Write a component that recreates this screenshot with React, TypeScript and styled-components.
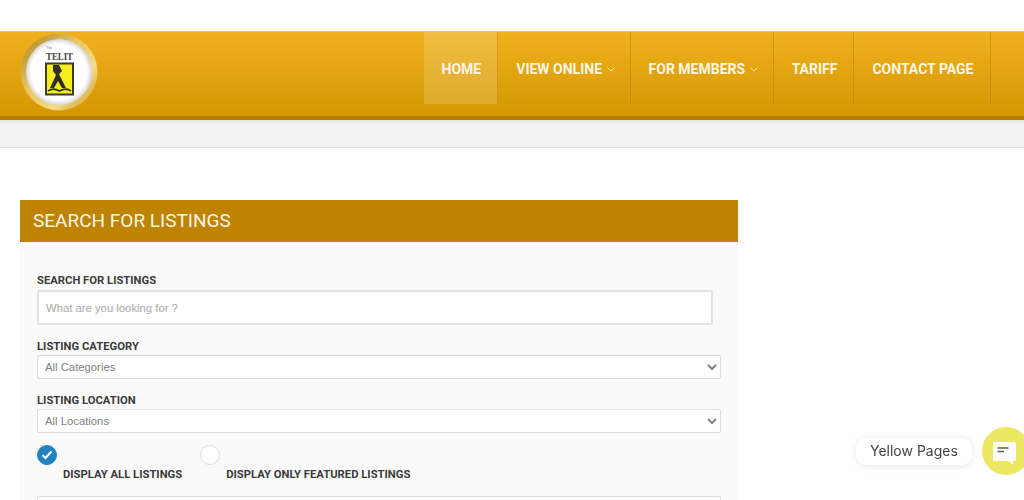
import styled, { createGlobalStyle } from "styled-components"

const GlobalStyle = createGlobalStyle`
  html, body {
    margin: 0;
    padding: 0;
    height: 500px;
    overflow: hidden;
    background: #fff;
    font-family: Roboto, "Liberation Sans", sans-serif;
  }
  * {
    box-sizing: border-box;
  }
`

const navItems = [
  { label: "HOME", active: true },
  { label: "VIEW ONLINE", caret: true },
  { label: "FOR MEMBERS", caret: true },
  { label: "TARIFF" },
  { label: "CONTACT PAGE" },
]

const chevron =
  "data:image/svg+xml,%3Csvg xmlns='http://www.w3.org/2000/svg' width='10' height='6'%3E%3Cpath d='M1 1l4 4 4-4' fill='none' stroke='%23808080' stroke-width='2'/%3E%3C/svg%3E"

function Caret() {
  return (
    <CaretIcon viewBox="0 0 10 6" aria-hidden="true">
      <path d="M1 1l4 4 4-4" fill="none" stroke="currentColor" strokeWidth="1.200" />
    </CaretIcon>
  )
}

function Logo() {
  return (
    <LogoMark viewBox="0 0 78 78" aria-hidden="true">
      <defs>
        <linearGradient id="ring" x1="0" y1="0" x2="1" y2="1">
          <stop offset="0" stopColor="#a9801f" />
          <stop offset="0.4" stopColor="#e8c560" />
          <stop offset="0.7" stopColor="#f4dc86" />
          <stop offset="1" stopColor="#c4901a" />
        </linearGradient>
        <radialGradient id="face">
          <stop offset="0.85" stopColor="#fff" />
          <stop offset="1" stopColor="#d6d6d6" />
        </radialGradient>
      </defs>
      <circle cx="39" cy="39" r="38.500" fill="url(#ring)" />
      <circle cx="39" cy="39" r="33" fill="url(#face)" />
      <text x="26" y="15.500" fontFamily="'Liberation Sans', sans-serif" fontSize="3.500" fill="#777">The</text>
      <text x="26" y="26.500" textLength="27" lengthAdjust="spacingAndGlyphs" fontFamily="'Liberation Serif', serif" fontWeight="700" fontSize="10.500" fill="#3f3f3f">TELIT</text>
      <rect x="26" y="30.500" width="27" height="31" fill="#f6ec1e" stroke="#3a3c30" strokeWidth="2" />
      <path d="M33 32h6l3 6-3 3 7 14h-4l-4-7-4 7h-4l6-13-3-4z" fill="#2e2e26" />
      <path d="M28 58c4-3 8-2 11.500 0 3.500-2 7.500-3 11.500 0" fill="none" stroke="#2e2e26" strokeWidth="1.500" />
    </LogoMark>
  )
}

function App() {
  return (
    <>
      <GlobalStyle />
      <TopStrip />
      <Header>
        <Logo />
        <Nav>
          {navItems.map(({ label, active, caret }) => (
            <NavItem key={label} $active={active}>
              {label}
              {caret && <Caret />}
            </NavItem>
          ))}
        </Nav>
      </Header>
      <SubBand />
      <Main>
        <Panel>
          <PanelTitle>SEARCH FOR LISTINGS</PanelTitle>
          <PanelBody>
            <FieldLabel>SEARCH FOR LISTINGS</FieldLabel>
            <SearchInput placeholder="What are you looking for ?" />
            <SelectLabel>LISTING CATEGORY</SelectLabel>
            <Select defaultValue="all">
              <option value="all">All Categories</option>
            </Select>
            <SelectLabel>LISTING LOCATION</SelectLabel>
            <Select defaultValue="all">
              <option value="all">All Locations</option>
            </Select>
            <RadioRow>
              <RadioOption>
                <RadioCircle $checked>
                  <svg width="12" height="10" viewBox="0 0 12 10" aria-hidden="true">
                    <path d="M1.500 5l3 3 6-6.500" fill="none" stroke="#fff" strokeWidth="2" />
                  </svg>
                </RadioCircle>
                <RadioText>DISPLAY ALL LISTINGS</RadioText>
              </RadioOption>
              <RadioOption>
                <RadioCircle />
                <RadioText>DISPLAY ONLY FEATURED LISTINGS</RadioText>
              </RadioOption>
            </RadioRow>
            <NextField />
          </PanelBody>
        </Panel>
      </Main>
      <ChatWidget>
        <ChatLabel>Yellow Pages</ChatLabel>
        <ChatButton>
          <svg width="23" height="23" viewBox="0 0 23 23" aria-hidden="true">
            <path d="M0 1.500a1.500 1.500 0 0 1 1.500-1.500h20a1.500 1.500 0 0 1 1.500 1.500v16a1.500 1.500 0 0 1-1.500 1.500h-1.500v4l-4.500-4h-14a1.500 1.500 0 0 1-1.500-1.500z" fill="#fff" />
            <path d="M4.500 6h11M4.500 9.500h6.500" stroke="#5f5f55" strokeWidth="1.500" />
          </svg>
        </ChatButton>
      </ChatWidget>
    </>
  )
}

const TopStrip = styled.div`
  height: 31px;
  background: #fff;
`

const Header = styled.header`
  display: flex;
  justify-content: space-between;
  height: 89px;
  padding: 1px 33.500px 0 20px;
  border-top: 1px solid #efc469;
  border-bottom: 4px solid #b67d07;
  background: linear-gradient(to bottom, #f0b11e, #d49700);
`

const LogoMark = styled.svg`
  width: 78px;
  height: 78px;
`

const Nav = styled.nav`
  display: flex;
  height: 72px;
  margin-top: -1px;
`

const NavItem = styled.a<{ $active?: boolean }>`
  display: flex;
  align-items: center;
  gap: 5px;
  padding: 2px 16px 0 18px;
  border-right: 1px solid rgba(176, 120, 0, 0.45);
  background: ${(props) => (props.$active ? "rgba(255, 255, 255, 0.16)" : "transparent")};
  color: #fdf6e3;
  font-size: 14px;
  font-weight: 700;
  white-space: nowrap;
`

const CaretIcon = styled.svg`
  width: 8px;
  height: 5px;
  margin: 1px -1.500px 0 0;
  color: #fbeecb;
`

const SubBand = styled.div`
  height: 28px;
  border-bottom: 1px solid #e2e2e2;
  background: linear-gradient(to bottom, #e4e4e4, #f2f2f2 5px);
`

const Main = styled.main`
  padding: 52px 0 0 20px;
`

const Panel = styled.section`
  width: 718px;
`

const PanelTitle = styled.h2`
  height: 42px;
  margin: 0;
  padding-left: 13px;
  background: #be8300;
  color: #fdf6e3;
  font-size: 19px;
  font-weight: 400;
  line-height: 41px;
`

const PanelBody = styled.div`
  padding: 32px 17px 0;
  background: #fafafa;
`

const FieldLabel = styled.label`
  display: block;
  height: 16px;
  color: #3a3a3a;
  font-size: 11.250px;
  font-weight: 700;
  line-height: 14px;
`

const SearchInput = styled.input`
  display: block;
  width: 676px;
  height: 35px;
  padding: 0 7px;
  border: 2px solid #e2e2e2;
  border-radius: 2px;
  background: #fff;
  font-family: "Liberation Sans", Arial, sans-serif;
  font-size: 11.300px;
  &::placeholder {
    color: #a9a9a9;
    opacity: 1;
  }
`

const SelectLabel = styled(FieldLabel)`
  height: 30px;
  padding-top: 15px;
`

const Select = styled.select`
  display: block;
  width: 684px;
  height: 24px;
  padding: 0 7px;
  border: 1px solid #dcdcdc;
  border-radius: 2px;
  background: #fff url("${chevron}") no-repeat right 3px center;
  color: #808080;
  font-family: "Liberation Sans", Arial, sans-serif;
  font-size: 11.300px;
  appearance: none;
`

const RadioRow = styled.div`
  display: flex;
  gap: 18px;
  padding-top: 12px;
`

const RadioOption = styled.div`
  display: flex;
  align-items: flex-start;
  gap: 6px;
`

const RadioCircle = styled.span<{ $checked?: boolean }>`
  display: flex;
  flex: none;
  align-items: center;
  justify-content: center;
  width: 20px;
  height: 20px;
  border: 1px solid ${(props) => (props.$checked ? "#2183bf" : "#dcdcdc")};
  border-radius: 50%;
  background: ${(props) => (props.$checked ? "#2183bf" : "#fff")};
`

const RadioText = styled.span`
  padding-top: 23px;
  color: #3a3a3a;
  font-size: 11.250px;
  font-weight: 700;
  line-height: 14px;
`

const NextField = styled.div`
  width: 684px;
  height: 24px;
  margin-top: 14px;
  border: 1px solid #dcdcdc;
  border-radius: 2px;
  background: #fff;
`

const ChatWidget = styled.div`
  position: fixed;
  top: 427px;
  left: 856px;
  display: flex;
  align-items: center;
  gap: 10px;
`

const ChatLabel = styled.span`
  display: block;
  height: 27px;
  padding: 0 14px;
  border-radius: 10px;
  background: #fff;
  box-shadow: 0 1px 8px rgba(0, 0, 0, 0.1);
  color: #444;
  font-family: Inter, Roboto, sans-serif;
  font-size: 14px;
  line-height: 26px;
  white-space: nowrap;
`

const ChatButton = styled.span`
  display: flex;
  flex: none;
  align-items: center;
  justify-content: center;
  width: 48px;
  height: 48px;
  padding: 4px 3px 0 0;
  border-radius: 50%;
  background: #ede864;
`

export default App
